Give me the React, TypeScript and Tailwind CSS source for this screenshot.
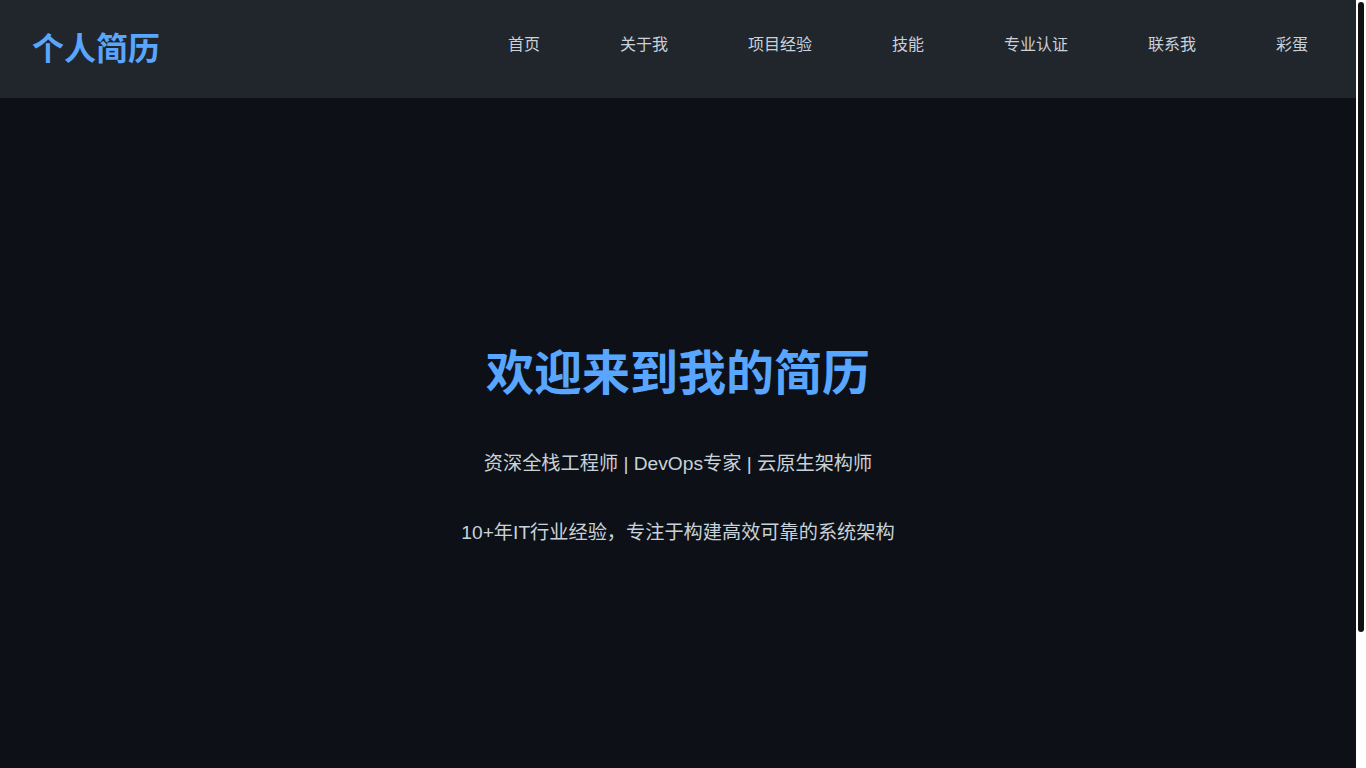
const navItems = ['首页', '关于我', '项目经验', '技能', '专业认证', '联系我', '彩蛋'];

export default function App() {
  return (
    <div
      className="relative h-screen overflow-hidden bg-white"
      style={{ fontFamily: '"Liberation Sans", "Noto Sans CJK SC", sans-serif' }}
    >
      <div className="mr-[10px] h-full bg-[#0d1117] text-[#c9d1d9]">
        {/* 顶部导航 */}
        <header className="h-[98px] bg-[#21262d] flex items-center justify-between pl-8 pr-12">
          <div className="text-[32px] font-bold text-[#58a6ff] leading-none">个人简历</div>
          <nav className="flex items-center gap-[80px] pb-[8px]">
            {navItems.map((item) => (
              <a key={item} href="#" className="text-base text-[#c9d1d9] leading-none">
                {item}
              </a>
            ))}
          </nav>
        </header>

        {/* 首屏 */}
        <section className="h-[692px] flex flex-col items-center justify-center text-center pt-[3px]">
          <h1 className="text-[48px] font-bold text-[#58a6ff] leading-[58px] mb-[46px]">欢迎来到我的简历</h1>
          <p className="text-[19.2px] leading-[30px] mb-[40px]">资深全栈工程师 | DevOps专家 | 云原生架构师</p>
          <p className="text-[19.2px] leading-[28px]">10+年IT行业经验，专注于构建高效可靠的系统架构</p>
        </section>
      </div>

      {/* 滚动条 */}
      <div className="absolute right-[2px] top-[2px] w-[6px] h-[630px] rounded-full bg-[#111111]" />
    </div>
  );
}
